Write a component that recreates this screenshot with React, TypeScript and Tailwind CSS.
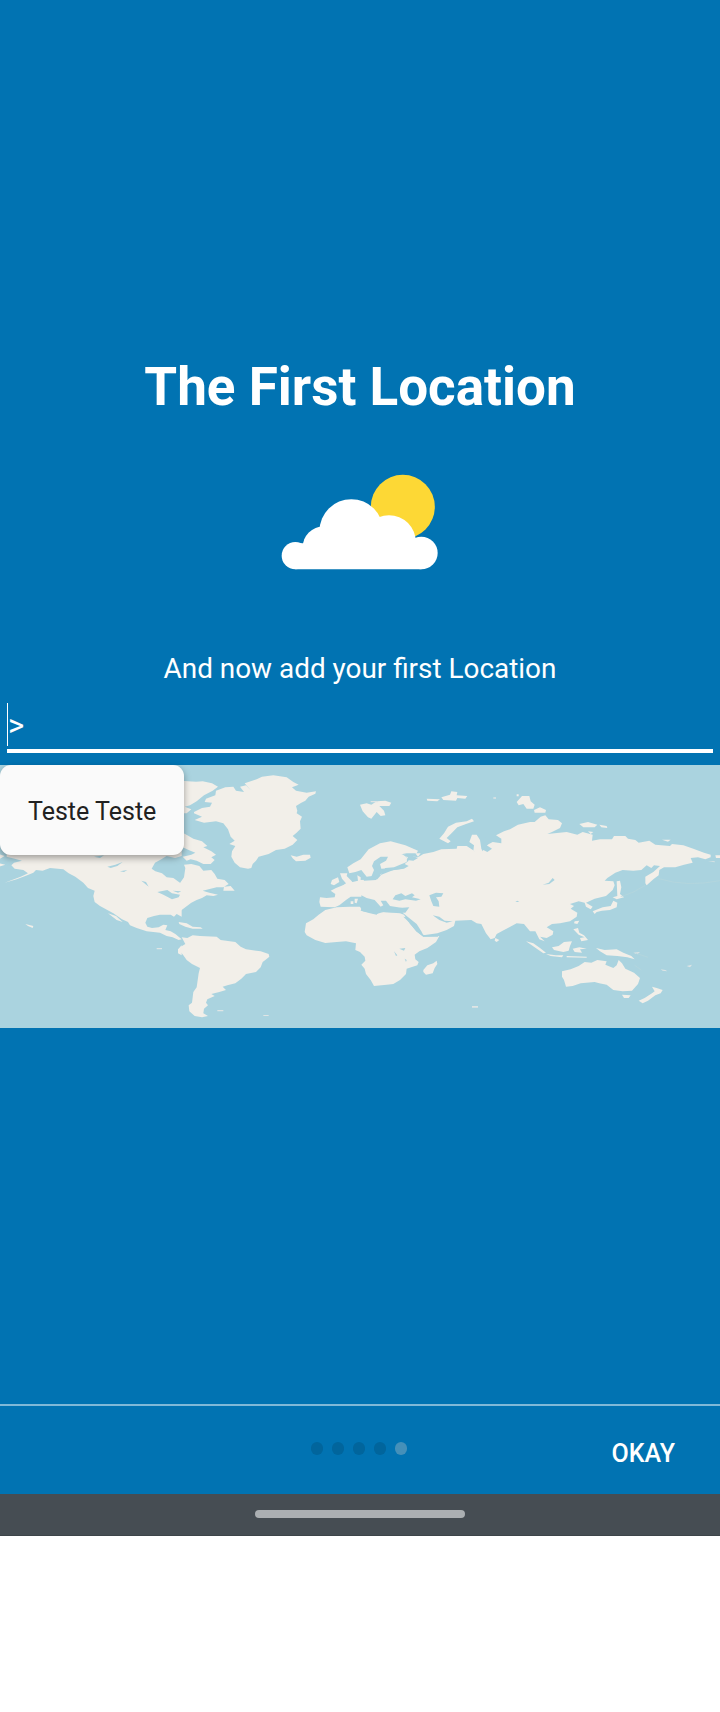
function WeatherIcon() {
  return (
    <svg viewBox="0 0 540 360" className="h-[120px] w-[180px]">
      <circle cx="398.5" cy="140.5" r="96" fill="#fdd835" />
      <g fill="#fff">
        <circle cx="76" cy="287" r="41" />
        <circle cx="161" cy="262" r="63" />
        <circle cx="244" cy="213" r="95.500" />
        <circle cx="357" cy="246" r="80.500" />
        <circle cx="454" cy="279" r="49" />
        <path d="M76 250H454V328H76Z" />
      </g>
    </svg>
  );
}

const WATER = "#aad3df";

function WorldMap() {
  return (
    <svg viewBox="0 15 2160 789" preserveAspectRatio="none" className="block h-[263px] w-full">
      <defs>
        <filter id="coast" filterUnits="userSpaceOnUse" x="-40" y="0" width="2240" height="820" colorInterpolationFilters="sRGB">
          <feGaussianBlur stdDeviation="2" />
        </filter>
      </defs>
      <path d="M0 15H2160V804H0Z" fill={WATER} />
      <g filter="url(#coast)">
        <g fill="#f2efe9">
          {/* North America, west */}
          <path d="M-10 280L14 288L0 296ZM-10 308L16 314L-10 322ZM20 270H545V288L525 294L500 288L484 298L465 308L455 326L466 334L486 340L500 352L520 354L545 372V470L530 462L522 470L512 464L480 464L462 468L442 474L436 488L442 500L456 504L476 502L490 494L502 496L496 510L512 514L526 522L545 538L536 540L518 532L500 528L480 518L440 514L410 504L390 496L384 486L366 478L340 460L322 450L300 438L284 426L280 408L284 392L264 384L250 368L226 350L206 340L190 328L150 324L128 332L108 330L100 338L76 348L50 358L14 368L30 362L62 350L84 340L70 330L44 326L34 316L42 308L66 302L44 296L20 290Z" />
          <path d="M324 460L348 468L368 486L350 480ZM76 492L100 498L98 504L84 498ZM545 556L534 568V580L545 586Z" />
          {/* Canadian Arctic, Labrador, Greenland, Iceland */}
          <path d="M540 62L588 65L608 64L636 70L654 80L638 92L612 106L590 124L570 136L554 140L574 148L560 160H545V62ZM540 214L562 226L580 236L606 244L622 258L610 262L634 274L648 284L634 292L644 300L632 312L610 312L590 302L572 298L560 302L548 290L574 284L586 278L566 270L545 260ZM538 372L552 352L556 324L552 314L574 312L598 318L610 332L634 330L644 342L652 356L674 360L686 372L670 382L650 382L626 388L608 392L628 398L654 404L640 408L620 406L606 414L590 420L574 428L558 440L545 450L538 456ZM672 380L692 378L704 392L670 392Z" />
          <path d="M582 156L606 144L630 140L636 128L614 126L618 116L646 106L648 92L676 82L700 80L708 92L732 96L720 80L738 76L754 92L734 70L770 58L786 50L820 46L860 52L880 66L896 74L876 82L888 92L920 98L948 94L946 101L926 110L916 122L904 128L888 138L892 152L890 160L906 170L900 184L902 206L888 220L878 228L892 240L878 254L854 266L828 270L806 282L776 290L768 302L758 312L754 324L744 326L720 322L704 308L694 290L696 274L706 258L688 252L704 242L692 230L684 208L670 190L648 184L612 188L584 180L606 170L582 160Z" />
          <path d="M872 286L890 290L910 284L930 284L932 293L916 302L888 304L878 295Z" />
          {/* Caribbean and South America */}
          <path d="M536 486L560 490L578 500L602 502L608 506L578 506L556 500L538 492ZM545 532L562 534L578 526L600 528L650 530L662 540L706 546L722 560L738 568L782 574L806 582L808 590L796 600L788 606L782 622L768 636L738 642L724 656L706 670L682 676L668 680L678 690L658 696L634 702L644 708L622 718L618 728L624 736L612 746L610 760L624 768L606 772L584 768L568 754L566 736L576 728L580 696L590 682L596 640L600 624L576 612L560 600L550 586L540 574V562L556 552Z" />
          {/* Africa */}
          <path d="M1086 440L1082 452L1130 462L1150 456L1200 460L1212 464L1230 492L1250 514L1270 530L1318 528L1308 546L1282 564L1258 574L1244 584L1246 598L1256 606L1252 616L1220 626L1218 642L1200 660L1180 672L1160 674L1122 678L1112 660L1098 642L1094 626L1084 614L1096 602L1094 590L1080 576L1066 570L1068 550L1038 544L1010 546L976 549L946 540L920 526L914 516L918 490L940 478L956 464L976 450L1010 442L1050 440Z" />
          <path d="M1270 630L1282 616L1300 610L1310 602L1312 612L1304 624L1298 640L1278 644L1270 636Z" />
          {/* Europe and Asia */}
          <path d="M960 412L980 414L1004 412L1006 402L992 392L1008 384L1038 372L1058 366L1074 362L1072 346L1066 342L1082 352L1082 360L1132 358L1144 344L1180 330L1212 326L1226 318L1214 312L1226 302L1220 290L1208 282L1228 288L1254 292L1270 282L1300 276L1324 268L1370 266L1372 258L1400 258L1428 276L1442 280L1450 270L1462 276L1476 266L1460 256L1478 246L1504 250L1504 236L1488 226L1512 214L1530 208L1554 194L1590 186L1604 186L1622 170L1636 166L1646 178L1674 180L1686 190L1680 204L1656 216L1642 222L1700 216L1732 224L1748 216L1778 224L1776 242L1800 238L1836 238L1842 228L1876 228L1884 236L1906 240L1916 248L1948 242L1966 254L2010 258L2016 252L2050 256L2080 266L2112 278L2132 284L2132 292L2116 298L2094 292L2072 294L2078 308L2052 314L2026 322L1992 322L1978 330L1976 346L1960 358L1940 376L1936 370L1936 350L1960 336L1980 318L1962 316L1954 324L1940 316L1924 330L1900 332L1868 330L1846 338L1822 354L1814 362L1840 364L1844 376L1838 390L1818 408L1784 416L1758 428L1778 440L1772 448L1758 440L1754 428L1736 424L1710 432L1722 438L1712 446L1732 458L1730 470L1710 484L1680 490L1656 492L1640 502L1660 514L1658 524L1640 534L1620 530L1634 544L1618 538L1606 514L1590 514L1572 492L1550 490L1528 502L1508 512L1490 522L1484 534L1472 538L1458 520L1444 492L1430 490L1414 480L1366 482L1362 498L1340 510L1312 520L1270 526L1264 514L1250 492L1220 468L1208 458L1208 444L1170 438L1158 422L1142 422L1150 436L1142 440L1124 420L1100 414L1084 406L1084 410H1052L1038 420L1018 436L1004 442L962 440L958 426Z" />
          <path d="M1042 322L1060 310L1082 298L1106 268L1140 250L1172 244L1216 256L1254 272L1250 280L1220 280L1208 282L1222 294L1220 306L1182 322L1156 324L1142 344L1130 336L1118 348L1100 350L1084 330L1066 336L1048 340Z" />
          {/* British Isles */}
          <path d="M1020 340L1042 340L1040 348L1054 362L1062 372L1050 378L1024 380L1038 370L1026 356ZM996 360L1014 352L1018 366L1002 376L992 372Z" />
          {/* Arctic islands of Eurasia */}
          <path d="M1080 134L1100 130L1114 134L1130 124L1156 122L1174 128L1168 138L1138 138L1152 152L1156 166L1142 168L1130 156L1114 176L1104 172L1088 154ZM1280 116L1320 118L1312 124L1282 122ZM1324 112L1350 104L1354 94L1372 96L1370 106L1402 108L1396 116L1372 114L1368 122L1330 120ZM1318 236L1332 220L1344 200L1368 188L1400 184L1416 176L1422 184L1398 192L1372 202L1356 218L1340 234L1352 244L1344 250ZM1408 246L1416 224L1430 224L1440 240L1444 266L1450 278L1436 284L1420 272L1422 256ZM1550 126L1566 108L1588 108L1592 124L1604 134L1600 146L1580 146L1570 132L1556 136ZM1602 150L1620 142L1638 150L1636 158L1604 158ZM1738 192L1764 186L1792 194L1784 202L1750 202ZM1798 194L1820 198L1822 204L1804 202ZM1764 214L1780 216L1772 222ZM1986 239H2012L2004 245ZM1550 103H1556V109H1550ZM2146 286H2170V294H2148Z" />
          {/* Sakhalin and Japan */}
          <path d="M1850 364L1860 362L1864 382L1860 402L1872 412L1850 418L1838 412L1852 408ZM1840 422L1852 428L1850 442L1830 450L1806 452L1790 456L1784 462L1778 454L1808 442L1832 438Z" />
          {/* South-east Asia */}
          <path d="M1724 484L1738 482L1732 492L1722 490ZM1720 508L1734 504L1738 518L1752 526L1764 540L1744 544L1740 534L1754 532L1736 524ZM1578 544L1600 550L1620 564L1638 578L1630 580L1604 562ZM1656 562L1676 558L1692 546L1716 544L1710 558L1706 572L1690 576L1662 570ZM1638 582L1668 586L1690 586L1686 592L1652 588ZM1718 566L1738 562L1760 566L1740 568L1746 578L1724 576ZM1788 564L1814 570L1850 568L1870 578L1894 588L1904 598L1882 592L1852 588L1820 586L1800 574ZM1700 588L1760 590V593L1700 592ZM1486 534L1498 540L1490 546L1484 542Z" />
          {/* Australia and New Zealand */}
          <path d="M1686 634L1712 628L1736 618L1754 606L1774 608L1792 600L1820 604L1816 614L1840 624L1850 616L1856 600L1866 610L1876 626L1902 638L1920 654L1914 672L1896 692L1868 694L1840 690L1820 674L1798 670L1784 666L1742 670L1718 678L1698 680L1692 660L1686 650ZM1866 704L1892 706L1886 714L1872 714ZM1956 680L1970 684L1988 690L1982 700L1966 706L1944 722L1928 730L1916 722L1934 714L1956 700L1964 694Z" />
        </g>
        {/* Small, faint islands */}
        <path d="M652 750H670V754H652ZM790 765H806V768H790ZM1900 578L1920 576L1912 583ZM1982 628L1996 630L2002 634L1988 632ZM2060 618L2076 614L2070 622ZM1416 738H1434V743H1416ZM1112 123H1134V127H1112ZM1480 112H1488V116H1480ZM2124 304H2144V307ZM470 564H486V568H470Z" transform="translate(0 0)" fill="#dfe5e5" />
        {/* Inland seas and lakes */}
        <g fill={WATER}>
          <path d="M322 320L346 314L368 306L352 318L332 324ZM360 334L382 330L372 336ZM282 290L312 286L300 294ZM424 362L438 366L446 380ZM472 396L502 390L516 400L540 404L536 412L516 418L490 404ZM518 392L544 394L534 398Z" />
          <path d="M1116 318L1122 304L1142 290L1164 290L1158 302L1140 312L1144 326L1182 324L1206 320L1208 326L1160 334L1138 344L1128 360L1092 362L1088 352L1114 350L1122 330ZM1204 282L1232 286L1254 294L1240 302L1220 300L1224 292ZM1178 418L1186 406L1204 400L1216 408L1236 400L1244 406L1236 412L1262 418L1248 422L1216 418L1198 422ZM1288 406L1308 398L1330 400L1324 410L1308 412L1316 424L1318 440L1300 438L1294 424ZM1080 422L1098 426L1112 438L1130 442L1148 440L1162 442L1196 444L1228 442L1222 450L1216 458L1136 456L1130 464L1110 460L1088 454L1080 440L1076 430Z" />
          <path d="M1210 470L1220 472L1240 490L1252 504L1268 524L1280 526L1316 525L1314 530L1270 530L1248 514L1230 490ZM1298 466L1318 470L1334 482L1358 484L1340 488L1318 480ZM1198 566L1216 564L1212 572ZM1182 574L1192 586L1188 588ZM1214 596L1220 600L1218 606ZM1546 426L1552 422L1558 426ZM1628 374L1646 368L1658 354L1664 360L1648 372ZM1446 232L1458 234L1464 252L1454 266L1446 256Z" />
        </g>
        <path d="M1064 416L1074 416L1070 430L1064 428ZM1052 424H1060V432H1052ZM1246 280L1262 280L1254 290Z" fill="#f2efe9" />
      </g>
      <path d="M1862 410Q1900 400 1936 376M1976 356Q2060 382 2160 362M1908 580L1944 592M1904 616L1924 630" fill="none" stroke="#b7d7dd" strokeWidth="2" />
    </svg>
  );
}

export default function App() {
  return (
    <div className="flex h-[1712px] w-[720px] flex-col bg-white font-['Roboto',sans-serif]">
      <main className="flex h-[1404px] flex-col bg-[#0173b2] text-white">
        <h1 className="mt-[354px] text-center text-[53px] leading-[66px] font-bold">The First Location</h1>
        <div className="mt-[40px] flex justify-center">
          <WeatherIcon />
        </div>
        <p className="mt-[72px] text-center text-[27.900px] leading-[34px]">And now add your first Location</p>
        <div className="mx-[7px] mt-[17px] flex h-[50px] items-start border-b-4 border-white">
          <span className="h-[43px] w-px bg-white" />
          <span className="text-[31px] leading-[46px]">&gt;</span>
        </div>
        <div className="relative mt-[12px]">
          <WorldMap />
          <div className="absolute top-0 left-0 flex h-[90px] w-[184px] items-center rounded-[11px] bg-[#fafafa] pt-[4px] pl-[28px] text-[25px] text-[#212121] shadow-[0_3px_7px_rgba(0,0,0,0.35)]">
            Teste Teste
          </div>
        </div>
      </main>
      <footer className="grid h-[90px] grid-cols-3 border-t-2 border-[#80b9d8] bg-[#0173b2]">
        <div />
        <div className="mt-[36px] flex justify-center gap-[8.500px] pr-[2px]">
          <span className="size-[12.500px] rounded-full bg-[#01659c]" />
          <span className="size-[12.500px] rounded-full bg-[#01659c]" />
          <span className="size-[12.500px] rounded-full bg-[#01659c]" />
          <span className="size-[12.500px] rounded-full bg-[#01659c]" />
          <span className="size-[12.500px] rounded-full bg-[#4590b9]" />
        </div>
        <button className="mt-[33px] mr-[45px] h-[30px] text-right text-[25px] leading-[30px] font-medium text-white">OKAY</button>
      </footer>
      <div className="flex h-[42px] justify-center border-b border-[#3d4449] bg-[#464d53] pt-[16px]">
        <div className="h-[8px] w-[210px] rounded-full bg-[#abafb2]" />
      </div>
    </div>
  );
}
